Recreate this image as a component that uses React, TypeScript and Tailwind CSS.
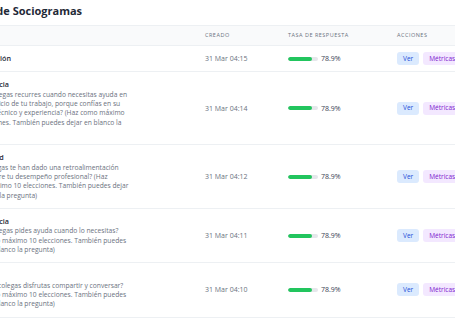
const sociogramas = [
  { title: 'Cooperación', lines: [], date: '31 Mar 04:15' },
  {
    title: 'Pertenencia',
    lines: [
      '¿A qué colegas recurres cuando necesitas ayuda en',
      'cada ejercicio de tu trabajo, porque confías en su',
      'dominio técnico y experiencia? (Haz como máximo',
      '10 elecciones. También puedes dejar en blanco la',
      'pregunta)',
    ],
    date: '31 Mar 04:14',
  },
  {
    title: 'Sinceridad',
    lines: [
      '¿Qué colegas te han dado una retroalimentación',
      'sólida sobre tu desempeño profesional? (Haz',
      'como máximo 10 elecciones. También puedes dejar',
      'en blanco la pregunta)',
    ],
    date: '31 Mar 04:12',
  },
  {
    title: 'Convivencia',
    lines: [
      '¿A qué colegas pides ayuda cuando lo necesitas?',
      '(Haz como máximo 10 elecciones. También puedes',
      'dejar en blanco la pregunta)',
    ],
    date: '31 Mar 04:11',
  },
  {
    title: 'Social',
    lines: [
      '¿Con qué colegas disfrutas compartir y conversar?',
      '(Haz como máximo 10 elecciones. También puedes',
      'dejar en blanco la pregunta)',
    ],
    date: '31 Mar 04:10',
  },
]

const cols = 'grid grid-cols-[237.7px_83px_109px_130px]'

export default function App() {
  return (
    <div className="h-[321px] w-[455px] overflow-hidden bg-white font-['Open_Sans',sans-serif]">
      <div className="-ml-[39.7px] w-[560px]">
        {/* titulo */}
        <h1 className="pl-[6.7px] pt-[4px] pb-[7px] text-[11px] leading-[14px] font-bold text-[#1f2937]">
          Lista de Sociogramas
        </h1>

        {/* cabecera */}
        <div className={`${cols} border-y border-[#edf0f3] bg-[#f9fafb] text-[5.5px] leading-[7px] tracking-[0.5px] text-[#6b7280] uppercase`}>
          <div className="px-[7px] py-[6px]">Nombre</div>
          <div className="px-[7px] py-[6px]">Creado</div>
          <div className="px-[7px] py-[6px]">Tasa de respuesta</div>
          <div className="px-[7px] py-[6px]">Acciones</div>
        </div>

        {/* filas */}
        {sociogramas.map((s) => (
          <div key={s.date} className={`${cols} items-center border-b border-[#edf0f3]`}>
            <div className="px-[7px] py-[8px]">
              <div className="text-[7.2px] leading-[9.33px] font-semibold text-[#1f2937]">{s.title}</div>
              {s.lines.length > 0 && (
                <p className="text-[6.7px] leading-[9.33px] whitespace-nowrap text-[#6b7280]">
                  {s.lines.map((l) => (
                    <span key={l} className="block">{l}</span>
                  ))}
                </p>
              )}
            </div>
            <div className="px-[7px] text-[7px] leading-[9px] text-[#6b7280]">{s.date}</div>
            <div className="flex items-center gap-[3px] px-[7px]">
              <div className="h-[4px] w-[30px] overflow-hidden rounded-full bg-[#e5e7eb]">
                <div className="h-full rounded-full bg-[#22c55e]" style={{ width: '78.9%' }} />
              </div>
              <span className="text-[7px] leading-[9px] text-[#374151]">78.9%</span>
            </div>
            <div className="flex items-center gap-[4px] px-[7px]">
              <button className="h-[13px] rounded-[3px] bg-[#dbeafe] px-[6px] text-[6.5px] text-[#1d4ed8]">Ver</button>
              <button className="h-[13px] rounded-[3px] bg-[#f3e8ff] px-[6px] text-[6.5px] text-[#7e22ce]">Métricas</button>
            </div>
          </div>
        ))}
      </div>
    </div>
  )
}
